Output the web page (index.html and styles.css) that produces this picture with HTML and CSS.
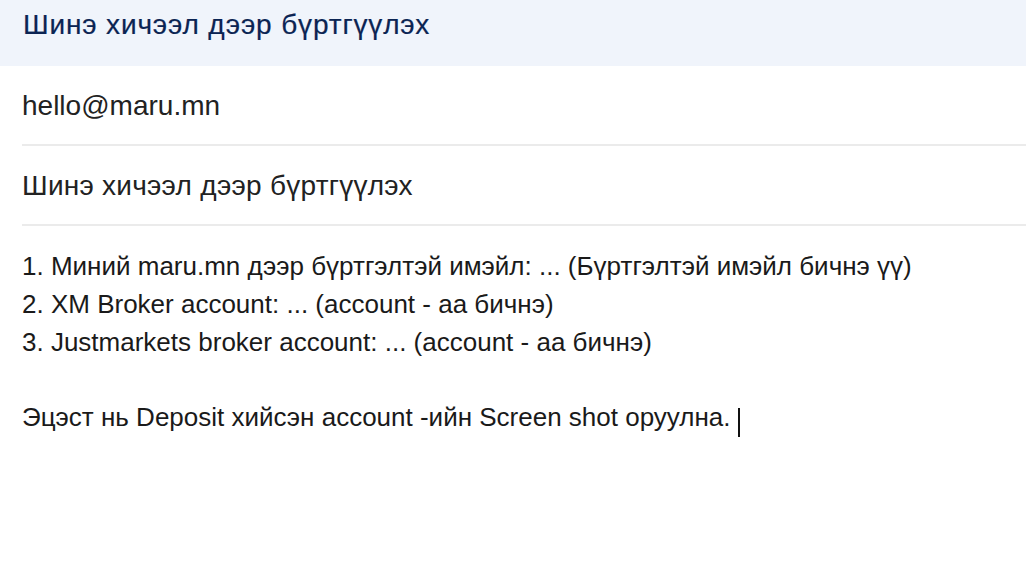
FILE: index.html
```html
<!DOCTYPE html>
<html lang="mn">
<head>
    <meta charset="UTF-8">
    <meta name="viewport" content="width=device-width, initial-scale=1.0">
    <title>Шинэ хичээл дээр бүртгүүлэх</title>
    <link rel="stylesheet" href="styles.css">
</head>
<body>
    <div class="mail-head">Шинэ хичээл дээр бүртгүүлэх</div>
    <div class="mail-form">
        <div class="field">hello@maru.mn</div>
        <div class="field subject">Шинэ хичээл дээр бүртгүүлэх</div>
        <div class="mail-body">
            <p>1. Миний maru.mn дээр бүртгэлтэй имэйл: ... (Бүртгэлтэй имэйл бичнэ үү)</p>
            <p>2. XM Broker account: ... (account - аа бичнэ)</p>
            <p>3. Justmarkets broker account: ... (account - аа бичнэ)</p>
            <p><br></p>
            <p>Эцэст нь Deposit хийсэн account -ийн Screen shot оруулна.<span class="caret"></span></p>
        </div>
    </div>
</body>
</html>
```

FILE: styles.css
```css
body {
    margin: 0;
    background: #fff;
    font-family: "Liberation Sans", Arial, sans-serif;
}
.mail-head {
    height: 66px;
    box-sizing: border-box;
    padding: 8px 23px 0;
    background-color: #f0f4fb;
    color: #0b2453;
    font-size: 28px;
    line-height: 34px;
    letter-spacing: 0.85px;
    -webkit-text-stroke: 0.2px #0b2453;
}
.mail-form {
    padding-left: 22px;
}
.field {
    height: 80px;
    box-sizing: border-box;
    padding-top: 23px;
    border-bottom: 2px solid #ebebeb;
    color: #222;
    font-size: 28px;
    line-height: 34px;
}
.subject {
    letter-spacing: 0.25px;
}
.mail-body {
    padding-top: 22px;
    color: #1a1a1a;
    font-size: 26px;
    line-height: 37.75px;
}
.mail-body p {
    margin: 0;
}
.caret {
    display: inline-block;
    width: 2px;
    height: 29px;
    margin-left: 7px;
    vertical-align: -11px;
    background: #111;
}
```
